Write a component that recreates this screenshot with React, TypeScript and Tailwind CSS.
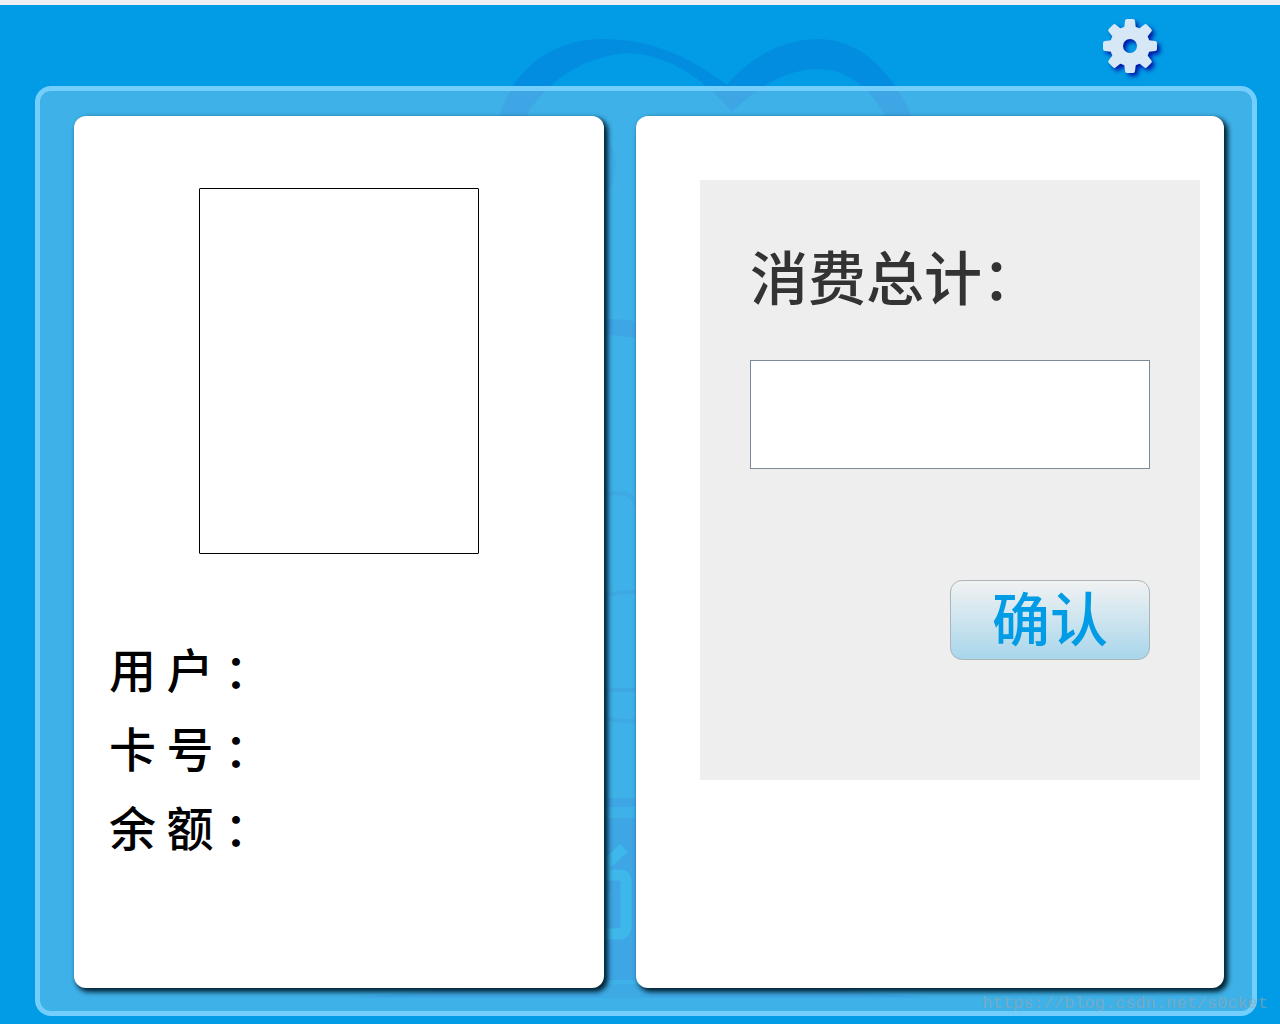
import React from "react";

const TOOTH_ANGLES = [0, 45, 90, 135, 180, 225, 270, 315];

const FIELDS = ["用 户 ：", "卡 号 ：", "余 额 ："];

const Backdrop: React.FC = () => (
  <svg
    className="absolute inset-0 -z-10 h-full w-full"
    viewBox="0 5 1280 1019"
    preserveAspectRatio="xMidYMin slice"
    aria-hidden="true"
  >
    <g fill="#028de0">
      <path d="M498 122C510 70 552 39 603 39C655 39 694 60 727 85C752 55 785 39 820 39C862 41 892 71 915 122H888C873 90 848 69 820 69C786 69 761 85 732 112C702 76 664 53 625 53C580 58 543 83 523 122Z" />
      <path d="M596 122Q616 145 616 165Q616 185 596 210Z" opacity="0.6" />
      <path d="M596 318Q620 319 644 322V340Q620 335 596 334Z" />
      <path d="M596 798H644V807H596Z" />
      <path d="M596 818H644V980H596Z" />
      <path d="M350 998Q640 970 935 998Z" opacity="0.7" />
    </g>
    <g fill="none" stroke="#028de0" strokeWidth="4" opacity="0.8">
      <path d="M596 498Q608 493 622 493Q632 494 638 508" />
      <path d="M596 596Q616 593 640 591" />
      <path d="M596 690H640" />
      <path d="M596 719H612Q622 722 640 721" />
    </g>
    <g fill="none" stroke="#02a5e9" strokeWidth="11">
      <path d="M604 866L624 848" />
      <path d="M598 875H620Q626 875 626 882V926Q626 934 618 934H600" />
    </g>
    <path d="M600 892H611V920H600Z" fill="#0295e4" />
  </svg>
);

const GearIcon: React.FC = () => (
  <svg
    className="size-[54px] drop-shadow-[3px_3px_2px_#0018a8]"
    viewBox="-27 -27 54 54"
    aria-hidden="true"
  >
    <g fill="#d6e8f6">
      <path
        fillRule="evenodd"
        d="M-20 0A20 20 0 1 1 20 0A20 20 0 1 1 -20 0ZM-7 0A7 7 0 1 0 7 0A7 7 0 1 0 -7 0Z"
      />
      {TOOTH_ANGLES.map((angle) => (
        <path
          key={angle}
          transform={`rotate(${angle})`}
          d="M-6 -17L-5 -25Q-5 -27 -3 -27H3Q5 -27 5 -25L6 -17Z"
        />
      ))}
    </g>
  </svg>
);

const UserCard: React.FC = () => (
  <section className="rounded-xl bg-white pt-[72px] pb-28 shadow-[3px_3px_5px_1px_#002233]">
    <div className="mx-auto h-[366px] w-[280px] rounded-[1px] border border-black" />
    <div className="mt-[74px] pl-[35px]">
      {FIELDS.map((label) => (
        <p key={label} className="text-[47px] leading-[79px] font-medium whitespace-nowrap text-black">
          {label}
        </p>
      ))}
    </div>
  </section>
);

const PaymentCard: React.FC = () => (
  <section className="rounded-xl bg-white pt-16 pr-6 pb-[206px] pl-16 shadow-[3px_3px_5px_1px_#002233]">
    <form
      className="bg-[#eeeeee] px-[50px] pt-[55px] pb-[120px]"
      onSubmit={(event) => event.preventDefault()}
    >
      <label
        htmlFor="total"
        className="block text-[58px] leading-[80px] font-medium whitespace-nowrap text-[#333333]"
      >
        消费总计：
      </label>
      <input
        id="total"
        type="text"
        className="mt-[45px] block h-[109px] w-full border border-[#7a8a99] bg-white px-3 text-[58px] text-[#333333] outline-none"
      />
      <div className="mt-[111px] flex justify-end">
        <button
          type="submit"
          className="h-20 w-[200px] rounded-xl border border-[#aab4b9] bg-linear-to-b from-[#f1f2f2] to-[#a8d6eb] pb-2 text-[58px] leading-none font-medium text-[#029be5]"
        >
          确认
        </button>
      </div>
    </form>
  </section>
);

export default function App() {
  return (
    <div className="relative isolate flex min-h-screen flex-col border-t-[5px] border-[#eff0f2] bg-[#029be5] pb-2 font-['Noto_Sans_CJK_SC',sans-serif]">
      <Backdrop />
      <header className="flex h-[81px] items-center justify-end pr-[123px]">
        <button type="button" aria-label="设置">
          <GearIcon />
        </button>
      </header>
      <main className="mr-[23px] ml-[35px] grid flex-1 grid-cols-[530fr_588fr] gap-8 rounded-2xl border-[5px] border-[#73cefb] bg-[#f2f3f5]/25 pt-[25px] pr-7 pb-[23px] pl-[34px]">
        <UserCard />
        <PaymentCard />
      </main>
      <p className="absolute right-3 bottom-2 font-['Liberation_Mono',monospace] text-[17px] leading-6 text-[#9aa5ad]/60">
        https://blog.csdn.net/s0cket
      </p>
    </div>
  );
}
